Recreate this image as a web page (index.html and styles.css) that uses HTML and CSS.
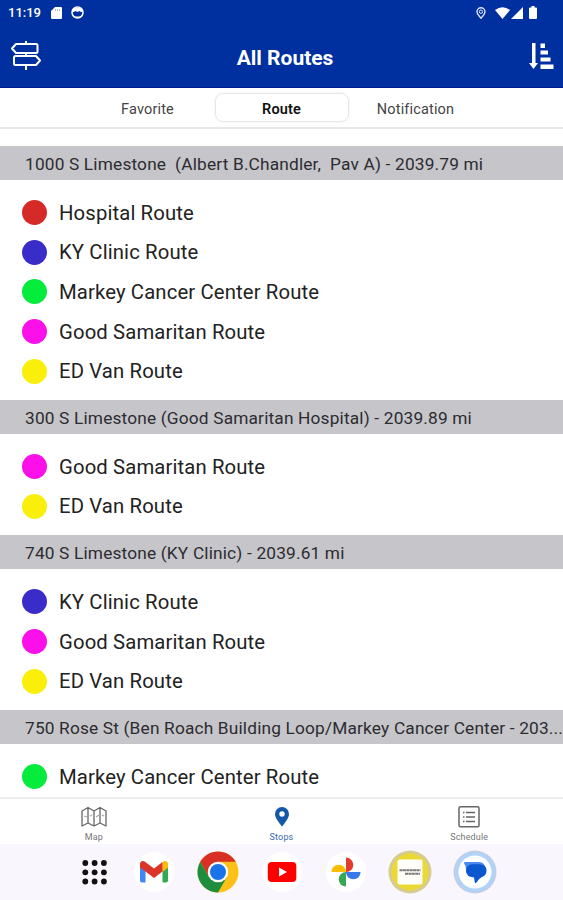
FILE: index.html
```html
<!DOCTYPE html>
<html lang="en">
<head>
  <meta charset="UTF-8">
  <title>All Routes</title>
  <link rel="stylesheet" href="styles.css">
</head>
<body>
  <header class="header">
    <!-- Status bar -->
    <div class="status">
      <span class="time">11:19</span>
      <svg class="sd" width="11" height="12" viewBox="0 0 11 12"><path d="M4 0h6q1 0 1 1v10q0 1-1 1H1q-1 0-1-1V4z" fill="#fff"/><path d="M4.500 2v2M6.500 2v2M8.500 2v2" stroke="#9eafe0" stroke-width=".8"/></svg>
      <svg width="13" height="13" viewBox="0 0 13 13"><circle cx="6.500" cy="6.500" r="5.500" fill="none" stroke="#fff" stroke-width="1.500"/><path d="M1 3.500C3 1.500 10 1.500 12 3.500V6h-2L8.500 5 6.500 6 4.500 5 3 6H1z" fill="#fff"/><path d="M4 10.500h5L8 12H5z" fill="#fff"/></svg>
      <svg class="loc" width="10" height="12" viewBox="0 0 10 12"><path d="M5 11.200C2.500 8.500 1 6.500 1 4.700a4 4 0 0 1 8 0C9 6.500 7.500 8.500 5 11.200z" fill="none" stroke="#dce3f8" stroke-width="1.400"/><circle cx="5" cy="4.700" r="1.700" fill="none" stroke="#dce3f8"/></svg>
      <svg class="wifi" width="15" height="12" viewBox="0 0 15 12"><path d="M0 3Q7.500-2.500 15 3L7.500 12z" fill="#fff"/></svg>
      <svg width="12" height="12" viewBox="0 0 12 12"><path d="M12 0v12H0z" fill="#fff"/></svg>
      <svg class="battery" width="8" height="13" viewBox="0 0 8 13"><path d="M2.500 0h3v1.500H7q1 0 1 1V12q0 1-1 1H1q-1 0-1-1V2.500q0-1 1-1h1.500z" fill="#fff"/></svg>
    </div>
    <div class="titlebar">
      <svg width="32" height="30" viewBox="0 0 32 30" fill="none" stroke="#fff" stroke-width="2" stroke-linejoin="round"><path d="M16 0v3M16 12v3M16 24v5"/><path d="M6 3h20q1.500 0 1.500 1.500v6q0 1.500-1.500 1.500H6L2 7.500z"/><path d="M26 15H5.500Q4 15 4 16.500v6Q4 24 5.500 24H26l4-4.500z"/></svg>
      <h1>All Routes</h1>
      <svg width="26" height="27" viewBox="0 0 26 27" fill="#fff"><path d="M4 0h3.500v20H10l-4.500 6L1 20h3z"/><path d="M12.500 .500H17V5h-4.500zM12.500 7.500H20v4h-7.500zM12.500 14.500H22.500v4h-10zM12.500 21.500H25.500V26h-13z"/></svg>
    </div>
  </header>

  <nav class="tabs">
    <span class="tab">Favorite</span>
    <span class="tab active">Route</span>
    <span class="tab">Notification</span>
  </nav>

  <main class="list">
    <h2 class="stop">1000 S Limestone&nbsp; (Albert B.Chandler,&nbsp; Pav A) - 2039.79 mi</h2>
    <ul class="routes">
      <li><i class="dot red"></i><span>Hospital Route</span></li>
      <li><i class="dot blue"></i><span>KY Clinic Route</span></li>
      <li><i class="dot green"></i><span>Markey Cancer Center Route</span></li>
      <li><i class="dot pink"></i><span>Good Samaritan Route</span></li>
      <li><i class="dot yellow"></i><span>ED Van Route</span></li>
    </ul>

    <h2 class="stop">300 S Limestone (Good Samaritan Hospital) - 2039.89 mi</h2>
    <ul class="routes">
      <li><i class="dot pink"></i><span>Good Samaritan Route</span></li>
      <li><i class="dot yellow"></i><span>ED Van Route</span></li>
    </ul>

    <h2 class="stop">740 S Limestone (KY Clinic) - 2039.61 mi</h2>
    <ul class="routes">
      <li><i class="dot blue"></i><span>KY Clinic Route</span></li>
      <li><i class="dot pink"></i><span>Good Samaritan Route</span></li>
      <li><i class="dot yellow"></i><span>ED Van Route</span></li>
    </ul>

    <h2 class="stop">750 Rose St (Ben Roach Building Loop/Markey Cancer Center - 203...</h2>
    <ul class="routes">
      <li><i class="dot green"></i><span>Markey Cancer Center Route</span></li>
    </ul>
  </main>

  <!-- Bottom navigation -->
  <nav class="bottom">
    <div class="item">
      <svg width="26" height="22" viewBox="0 0 26 22" fill="none" stroke="#666" stroke-width="1.300" stroke-linejoin="round"><path d="M1 5l6-3.500L13 5l6-3.500L25 5v15l-6-3-6 3-6-3-6 3zM7 1.500V17M13 5v15M19 1.500V17"/><path d="M3 10l3 1M9 10l2-1M15 11l3-2M21 9l2 1" stroke="#aaa"/></svg>
      <span>Map</span>
    </div>
    <div class="item current">
      <svg width="26" height="22" viewBox="0 0 26 22"><path d="M13 20.500C9 15.500 6 11.500 6 8a7 7 0 0 1 14 0c0 3.500-3 7.500-7 12.500z" fill="#1658a8"/><circle cx="13" cy="8" r="2.700" fill="#fff"/></svg>
      <span>Stops</span>
    </div>
    <div class="item">
      <svg width="26" height="22" viewBox="0 0 26 22" fill="none" stroke="#666"><rect x="3" y=".800" width="20" height="20" rx="1.500" stroke-width="1.500"/><path d="M10 6.500h9M10 11h9M10 15.500h9" stroke-width="1.300"/><path d="M7 6.500h1.500M7 11h1.500M7 15.500h1.500" stroke-width="1.500"/></svg>
      <span>Schedule</span>
    </div>
  </nav>

  <!-- App dock -->
  <footer class="dock">
    <svg viewBox="0 0 44 44"><g fill="#111"><circle cx="18.300" cy="13" r="2.900"/><circle cx="27.600" cy="13" r="2.900"/><circle cx="36.900" cy="13" r="2.900"/><circle cx="18.300" cy="22.300" r="2.900"/><circle cx="27.600" cy="22.300" r="2.900"/><circle cx="36.900" cy="22.300" r="2.900"/><circle cx="18.300" cy="31.500" r="2.900"/><circle cx="27.600" cy="31.500" r="2.900"/><circle cx="36.900" cy="31.500" r="2.900"/></g></svg>
    <svg viewBox="0 0 44 44"><circle cx="22" cy="22" r="20" fill="#fff"/><path d="M8 15v15.500q0 2 2 2h3.500V18z" fill="#4285f4"/><path d="M30.500 18v14.500H34q2 0 2-2V15z" fill="#34a853"/><path d="M30.500 13v9L36 17.500V14c0-2.800-3-4-5-2.300z" fill="#fbbc04"/><path d="M8 14c0-2.800 3-4 5-2.300l9 6.800 8.500-6.500v9.500L22 28l-8.500-6.500L8 17.500z" fill="#dc3428"/></svg>
    <svg viewBox="0 0 44 44"><circle cx="22" cy="22" r="20.500" fill="#fbc116"/><path d="M4.250 11.750A20.500 20.500 0 0 1 39.750 11.750H22L13.100 27.100z" fill="#d93025"/><path d="M4.250 11.750A20.500 20.500 0 0 0 22 42.500L30.900 27.100 22 22 13.100 27.100z" fill="#1e8e3e"/><circle cx="22" cy="22" r="10.300" fill="#fff"/><circle cx="22" cy="22" r="8" fill="#1a73e8"/></svg>
    <svg viewBox="0 0 44 44"><circle cx="22" cy="22" r="20" fill="#fff"/><rect x="7.800" y="12" width="28.500" height="20" rx="4" fill="#f00"/><path d="M19 17.500l8 4.500-8 4.500z" fill="#fff"/></svg>
    <svg viewBox="0 0 44 44"><circle cx="22" cy="22" r="20" fill="#fff"/><path d="M22 7.500a7.300 7.300 0 0 1 0 14.600z" fill="#e33b2e"/><path d="M7.400 22a7.300 7.300 0 0 1 14.600 0z" fill="#fbbc04"/><path d="M22 22a7.300 7.300 0 0 0 0 14.600z" fill="#34a853"/><path d="M22 22h14.600a7.300 7.300 0 0 1-14.600 0z" fill="#3978e8"/></svg>
    <svg viewBox="0 0 44 44"><circle cx="22" cy="22" r="21.500" fill="#d6cc91"/><circle cx="22" cy="22" r="18.500" fill="#ead935"/><rect x="9.500" y="9.500" width="25" height="25" rx="2" fill="#fffef8"/><path d="M11.500 20.300h21M17 23.800h15" stroke="#777" stroke-width="2" stroke-dasharray="3 .4"/></svg>
    <svg viewBox="0 0 44 44"><circle cx="22" cy="22" r="21.500" fill="#c0cee5"/><circle cx="22" cy="22" r="20" fill="#b2d3f8"/><circle cx="22" cy="22" r="16.500" fill="#fff"/><path d="M12 12h14q6 0 6 6.500T26 26h-7q-6 0-6-7 0-3-1.800-5.200-.8-1.300.8-1.800z" fill="#4b8bf0"/><path d="M19.500 14.300h7q7 0 7 6.500 0 4.500-4.500 6.200-3 1.200-5.500 5.500-1.300 1.500-1.700-.3L21 27.500q-8-.5-8-6.700t6.500-6.500z" fill="#0b57d0"/></svg>
  </footer>
</body>
</html>
```
FILE: styles.css
```css
* {
  box-sizing: border-box;
}

body {
  width: 563px;
  height: 900px;
  margin: 0;
  display: flex;
  flex-direction: column;
  overflow: hidden;
  background: #fff;
  color: #222;
  font-family: Roboto, sans-serif;
}

svg {
  display: block;
  flex: none;
}

.header {
  height: 88px;
  flex: none;
  background: #00309f;
  border-bottom: 1px solid #001b8d;
  color: #fff;
}

.status {
  display: flex;
  align-items: center;
  height: 25px;
  padding: 0 26px 0 8px;
}

.time {
  width: 43px;
  font-size: 13px;
  font-weight: 500;
}

.sd {
  margin-right: 9px;
}

.loc {
  margin-left: auto;
  margin-right: 9px;
}

.wifi {
  margin-right: 1px;
}

.battery {
  margin-left: 6px;
}

.titlebar {
  display: flex;
  align-items: center;
  justify-content: space-between;
  height: 62px;
  padding: 0 9px 0 10px;
}

.titlebar h1 {
  margin: 3px 0 0;
  font-size: 21px;
  font-weight: 700;
}

.tabs {
  display: flex;
  justify-content: center;
  align-items: center;
  flex: none;
  height: 41px;
  border-bottom: 2px solid #e8e8e8;
}

.tab {
  width: 134px;
  height: 29px;
  line-height: 34px;
  text-align: center;
  font-size: 14.5px;
  letter-spacing: 0.15px;
  color: #444;
}

.tab.active {
  border: 1px solid #e7e7e7;
  border-radius: 8px;
  box-shadow: 0 0 2px #e8e8e8;
  line-height: 32px;
  font-weight: 600;
  color: #111;
}

.list {
  flex: 1;
  min-height: 0;
  padding-top: 17px;
  overflow: hidden;
}

.stop {
  height: 34px;
  margin: 0;
  padding-left: 25px;
  background: #c6c5ca;
  color: #2c2c30;
  font-size: 17.3px;
  font-weight: 400;
  line-height: 36px;
  letter-spacing: 0.17px;
  white-space: nowrap;
}

.routes {
  margin: 0;
  padding: 13px 0 9px 22px;
  list-style: none;
}

.routes li {
  display: flex;
  align-items: center;
  gap: 12px;
  height: 39.6px;
  font-size: 20.3px;
  letter-spacing: 0.13px;
}

.dot {
  width: 25px;
  height: 25px;
  border-radius: 50%;
}

.red { background: #d62a28; }
.blue { background: #3a2cc8; }
.green { background: #05ec3d; }
.pink { background: #fb10e9; }
.yellow { background: #f9ef0a; }

.bottom {
  display: flex;
  flex: none;
  height: 47px;
  border-top: 2px solid #ededed;
}

.item {
  display: flex;
  flex-direction: column;
  align-items: center;
  flex: 1;
  padding-top: 7px;
  font-size: 9px;
  letter-spacing: 0.15px;
  color: #777;
}

.item span {
  margin-top: 4px;
}

.item.current {
  color: #3a69b0;
}

.dock {
  display: flex;
  justify-content: center;
  flex: none;
  gap: 20.2px;
  height: 56px;
  padding-top: 6px;
  padding-left: 1px;
  background: #f9f6fe;
}

.dock svg {
  width: 44px;
  height: 44px;
}
```
